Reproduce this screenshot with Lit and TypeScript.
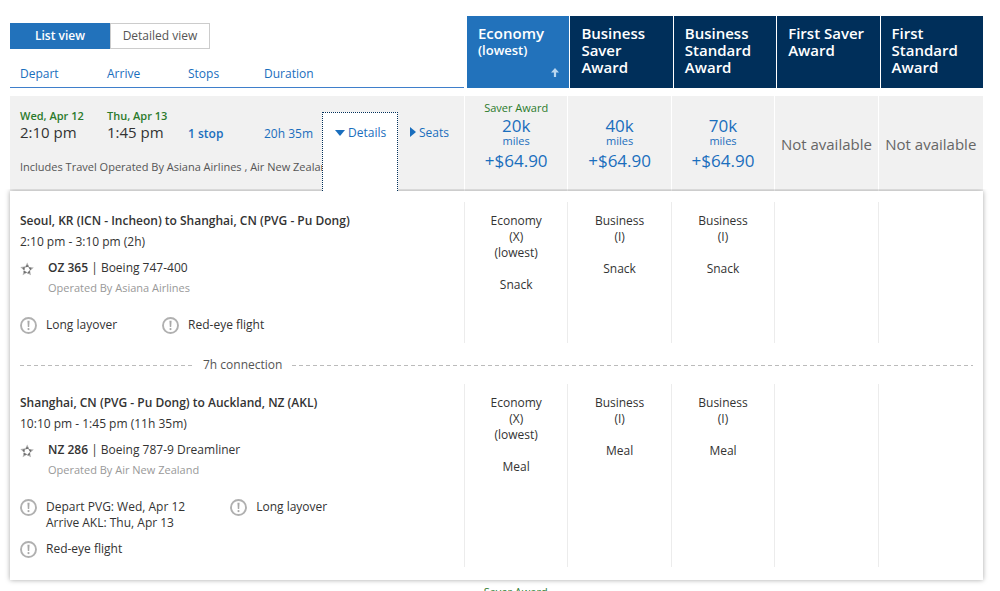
import { LitElement, html, svg, css, nothing } from "lit";
import { customElement, state } from "lit/decorators.js";
import { classMap } from "lit/directives/class-map.js";

interface Fare {
  miles?: string;
  price?: string;
  saver?: boolean;
}

interface Leg {
  route: string;
  times: string;
  flight: string;
  aircraft: string;
  operator: string;
  alerts: string[][];
  cabins: { name: string[]; meal: string }[];
}

const SORTS = ["Depart", "Arrive", "Stops", "Duration"];

const CABINS = [
  { name: "Economy", note: "(lowest)" },
  { name: "Business Saver Award" },
  { name: "Business Standard Award" },
  { name: "First Saver Award" },
  { name: "First Standard Award" },
];

const FARES: Fare[] = [
  { miles: "20k", price: "+$64.90", saver: true },
  { miles: "40k", price: "+$64.90" },
  { miles: "70k", price: "+$64.90" },
  {},
  {},
];

const LEGS: Leg[] = [
  {
    route: "Seoul, KR (ICN - Incheon) to Shanghai, CN (PVG - Pu Dong)",
    times: "2:10 pm - 3:10 pm (2h)",
    flight: "OZ 365",
    aircraft: "Boeing 747-400",
    operator: "Operated By Asiana Airlines",
    alerts: [["Long layover"], ["Red-eye flight"]],
    cabins: [
      { name: ["Economy", "(X)", "(lowest)"], meal: "Snack" },
      { name: ["Business", "(I)"], meal: "Snack" },
      { name: ["Business", "(I)"], meal: "Snack" },
    ],
  },
  {
    route: "Shanghai, CN (PVG - Pu Dong) to Auckland, NZ (AKL)",
    times: "10:10 pm - 1:45 pm (11h 35m)",
    flight: "NZ 286",
    aircraft: "Boeing 787-9 Dreamliner",
    operator: "Operated By Air New Zealand",
    alerts: [
      ["Depart PVG: Wed, Apr 12", "Arrive AKL: Thu, Apr 13"],
      ["Long layover"],
      ["Red-eye flight"],
    ],
    cabins: [
      { name: ["Economy", "(X)", "(lowest)"], meal: "Meal" },
      { name: ["Business", "(I)"], meal: "Meal" },
      { name: ["Business", "(I)"], meal: "Meal" },
    ],
  },
];

const allianceIcon = html`<svg class="alliance" viewBox="0 0 14 14" aria-hidden="true">
  ${[0, 72, 144, 216, 288].map(
    (a) => svg`<g transform="rotate(${a} 7 7.5)">
      <path d="M7.2 .4 L9.1 4.5 L5 5.2 Z" fill="#b0b0b0" />
      <path d="M7 2.8 L9.1 4.5 L5 5.4 Z" fill="#6e6e6e" />
    </g>`
  )}
</svg>`;

const alertIcon = html`<svg class="alert-icon" viewBox="0 0 17 17" aria-hidden="true">
  <circle cx="8.5" cy="8.5" r="7.5" fill="none" stroke="#b0b0b0" stroke-width="1.9" />
  <path d="M7.4 3.8h2.2l-.4 6.2H7.8z" fill="#a8a8a8" />
  <circle cx="8.5" cy="12.1" r="1.1" fill="#a8a8a8" />
</svg>`;

@customElement("app-root")
export class AppRoot extends LitElement {
  @state() private view = "List view";
  @state() private open = true;

  static styles = css`
    :host {
      display: block;
      box-sizing: border-box;
      height: 100vh;
      overflow: hidden;
      padding: 16px 17px 0 10px;
      background: #fff;
      color: #333;
      font: 12px/16px "Open Sans", "Noto Sans", sans-serif;
    }
    button {
      margin: 0;
      padding: 0;
      border: 0;
      background: none;
      color: #1a6ebd;
      font: inherit;
      text-align: left;
      cursor: pointer;
    }
    a {
      color: #1a6ebd;
      text-decoration: none;
    }
    p {
      margin: 0;
    }
    table,
    thead,
    tbody {
      display: block;
    }
    th,
    td {
      padding: 0;
      font-weight: inherit;
      text-align: left;
    }
    .head {
      display: grid;
      grid-template-columns: 456px repeat(5, 1fr);
      column-gap: 1px;
    }
    .tools {
      display: flex;
      flex-direction: column;
      justify-content: space-between;
      margin-right: 2px;
      padding-top: 7px;
      border-bottom: 1px solid #3f7fcb;
    }
    .views {
      display: flex;
    }
    .view {
      width: 100px;
      height: 26px;
      box-sizing: border-box;
      border: 1px solid #ccc;
      color: #555;
      text-align: center;
    }
    .view.on {
      border-color: #2272bb;
      background: #2272bb;
      color: #fff;
      font-weight: 600;
    }
    .columns {
      display: grid;
      grid-template-columns: 87px 81px 76px 1fr;
      padding-left: 10px;
    }
    .sorts {
      padding-bottom: 5px;
    }
    .cabin {
      display: flex;
      height: 72px;
      background: #002f5a;
    }
    .cabin button {
      display: flex;
      flex: 1;
      flex-direction: column;
      padding: 9px 10px 11px 11px;
      color: #fff;
      font-size: 15px;
      font-weight: 600;
      line-height: 17px;
    }
    .cabin.on {
      background: #2272bb;
    }
    .cabin small {
      font-size: 13px;
    }
    .sort-icon {
      width: 8px;
      height: 9px;
      margin-top: auto;
      align-self: flex-end;
    }
    .result {
      display: grid;
      grid-template-columns: 454px repeat(4, 102fr) 104fr;
      column-gap: 1px;
      margin-top: 8px;
    }
    .summary {
      display: grid;
      grid-template-columns: 312px 76px 1fr;
      height: 95px;
      background: #f1f1f1;
    }
    .trip {
      padding-top: 12px;
      white-space: nowrap;
      overflow: hidden;
    }
    .date {
      color: #2b7a2b;
      font-size: 11px;
      font-weight: 600;
      line-height: 15px;
    }
    .time {
      font-size: 15px;
      line-height: 18px;
    }
    .figure {
      padding-top: 18px;
    }
    .stop {
      font-weight: 600;
    }
    .carriers {
      padding: 17px 0 0 10px;
      color: #555;
      font-size: 11px;
    }
    .toggle {
      display: flex;
      align-items: flex-start;
      gap: 3px;
      padding: 29px 0 0 12px;
    }
    .toggle.open {
      z-index: 1;
      margin-top: 16px;
      padding: 12px 0 0 12px;
      border: 1px dotted #002f5a;
      border-bottom: 0;
      background: #fff;
    }
    .caret {
      width: 10px;
      height: 6px;
      margin-top: 5px;
    }
    .caret.side {
      width: 6px;
      height: 10px;
      margin-top: 2px;
    }
    .fare {
      display: flex;
      flex-direction: column;
      align-items: center;
      box-sizing: border-box;
      height: 95px;
      padding-top: 4px;
      background: #f1f1f1;
      color: #1a6ebd;
    }
    .fare a {
      display: flex;
      flex-direction: column;
      align-items: center;
    }
    .saver {
      height: 16px;
      color: #2b7a2b;
      font-size: 11px;
    }
    .amount {
      font-size: 17px;
      line-height: 20px;
    }
    .unit {
      margin-bottom: 6px;
      font-size: 11px;
      line-height: 9px;
    }
    .fare.none {
      padding-top: 0;
      justify-content: center;
      color: #666;
      font-size: 15px;
      white-space: nowrap;
    }
    .fare.plain {
      background: none;
    }
    .panel {
      display: block;
      padding: 11px 0 13px;
      background: #fff;
      box-shadow: 0 0 5px rgba(0, 0, 0, 0.35);
      clip-path: inset(-2px -6px -6px -6px);
    }
    .panel > td {
      display: block;
    }
    .leg {
      display: grid;
      grid-template-columns: 454px repeat(4, 103fr) 105fr;
    }
    .info {
      padding: 11px 0 9px 10px;
    }
    .route {
      font-weight: 600;
    }
    .times {
      margin-top: 5px;
    }
    .flight {
      display: grid;
      grid-template-columns: 28px 1fr;
      align-items: center;
      row-gap: 4px;
      margin-top: 10px;
    }
    .flight b {
      font-weight: 600;
    }
    .alliance {
      width: 14px;
      height: 14px;
      margin-top: 2px;
    }
    .operator {
      grid-column: 2;
      color: #999;
      font-size: 11px;
    }
    .alerts {
      display: flex;
      flex-wrap: wrap;
      gap: 10px 45px;
      margin: 21px 0 0;
      padding: 0;
      list-style: none;
    }
    .alerts li {
      display: flex;
      gap: 9px;
    }
    .alert-icon {
      width: 17px;
      height: 17px;
    }
    .service {
      border-left: 1px solid #ececec;
      padding-top: 11px;
      text-align: center;
    }
    .meal {
      margin-top: 16px;
    }
    .connection {
      display: flex;
      align-items: center;
      box-sizing: border-box;
      height: 41px;
      padding: 3px 10px 0;
      color: #555;
      gap: 10px;
    }
    .connection::before,
    .connection::after {
      content: "";
      width: 173px;
      height: 1px;
      background: repeating-linear-gradient(90deg, #bbb 0 4px, transparent 4px 7px);
    }
    .connection::after {
      flex: 1;
    }
  `;

  private renderHead() {
    return html`<thead>
      <tr class="head">
        <th class="tools">
          <div class="views">
            ${["List view", "Detailed view"].map(
              (v) => html`<button
                class=${classMap({ view: true, on: v === this.view })}
                aria-pressed=${v === this.view}
                @click=${() => (this.view = v)}
              >${v}</button>`
            )}
          </div>
          <div class="columns sorts">${SORTS.map((s) => html`<button>${s}</button>`)}</div>
        </th>
        ${CABINS.map(
          (c, i) => html`<th class=${classMap({ cabin: true, on: i === 0 })} scope="col">
            <button>
              <span>${c.name}</span>
              ${c.note
                ? html`<small>${c.note}</small>
                    <svg class="sort-icon" viewBox="0 0 8 9" aria-hidden="true">
                      <path d="M4 0 8 4.6H5.1V9H2.9V4.6H0z" fill="#b9d6ef" />
                    </svg>`
                : nothing}
            </button>
          </th>`
        )}
      </tr>
    </thead>`;
  }

  private renderFare(f: Fare) {
    return f.miles
      ? html`<td class="fare">
          <span class="saver">${f.saver ? "Saver Award" : ""}</span>
          <a href="#">
            <span class="amount">${f.miles}</span>
            <span class="unit">miles</span>
            <span class="amount">${f.price}</span>
          </a>
        </td>`
      : html`<td class="fare none">Not available</td>`;
  }

  private renderSummary() {
    return html`<tr class="result">
      <td class="summary">
        <div class="trip">
          <div class="columns">
            <div><p class="date">Wed, Apr 12</p><p class="time">2:10 pm</p></div>
            <div><p class="date">Thu, Apr 13</p><p class="time">1:45 pm</p></div>
            <a class="figure stop" href="#">1 stop</a>
            <a class="figure" href="#">20h 35m</a>
          </div>
          <p class="carriers">Includes Travel Operated By Asiana Airlines , Air New Zealand</p>
        </div>
        <button
          class=${classMap({ toggle: true, open: this.open })}
          aria-expanded=${this.open}
          @click=${() => (this.open = !this.open)}
        >
          <svg class="caret" viewBox="0 0 10 6" aria-hidden="true"><path d="M0 0h10L5 6z" fill="#1a6ebd" /></svg>
          Details
        </button>
        <button class="toggle">
          <svg class="caret side" viewBox="0 0 6 10" aria-hidden="true"><path d="M0 0v10L6 5z" fill="#1a6ebd" /></svg>
          Seats
        </button>
      </td>
      ${FARES.map((f) => this.renderFare(f))}
    </tr>`;
  }

  private renderLeg(leg: Leg) {
    return html`<div class="leg">
      <div class="info">
        <p class="route">${leg.route}</p>
        <p class="times">${leg.times}</p>
        <div class="flight">
          ${allianceIcon}
          <span><b>${leg.flight}</b> | ${leg.aircraft}</span>
          <span class="operator">${leg.operator}</span>
        </div>
        <ul class="alerts">
          ${leg.alerts.map(
            (lines) => html`<li>${alertIcon}<div>${lines.map((l) => html`<p>${l}</p>`)}</div></li>`
          )}
        </ul>
      </div>
      ${CABINS.map((_, i) => {
        const c = leg.cabins[i];
        return html`<div class="service">
          ${c ? html`${c.name.map((n) => html`<p>${n}</p>`)}<p class="meal">${c.meal}</p>` : nothing}
        </div>`;
      })}
    </div>`;
  }

  render() {
    return html`<table>
      ${this.renderHead()}
      <tbody>
        ${this.renderSummary()}
        ${this.open
          ? html`<tr class="panel">
              <td>
                ${this.renderLeg(LEGS[0])}
                <div class="connection">7h connection</div>
                ${this.renderLeg(LEGS[1])}
              </td>
            </tr>`
          : nothing}
        <tr class="leg">
          <td></td>
          <td class="fare plain"><span class="saver">Saver Award</span></td>
        </tr>
      </tbody>
    </table>`;
  }
}
